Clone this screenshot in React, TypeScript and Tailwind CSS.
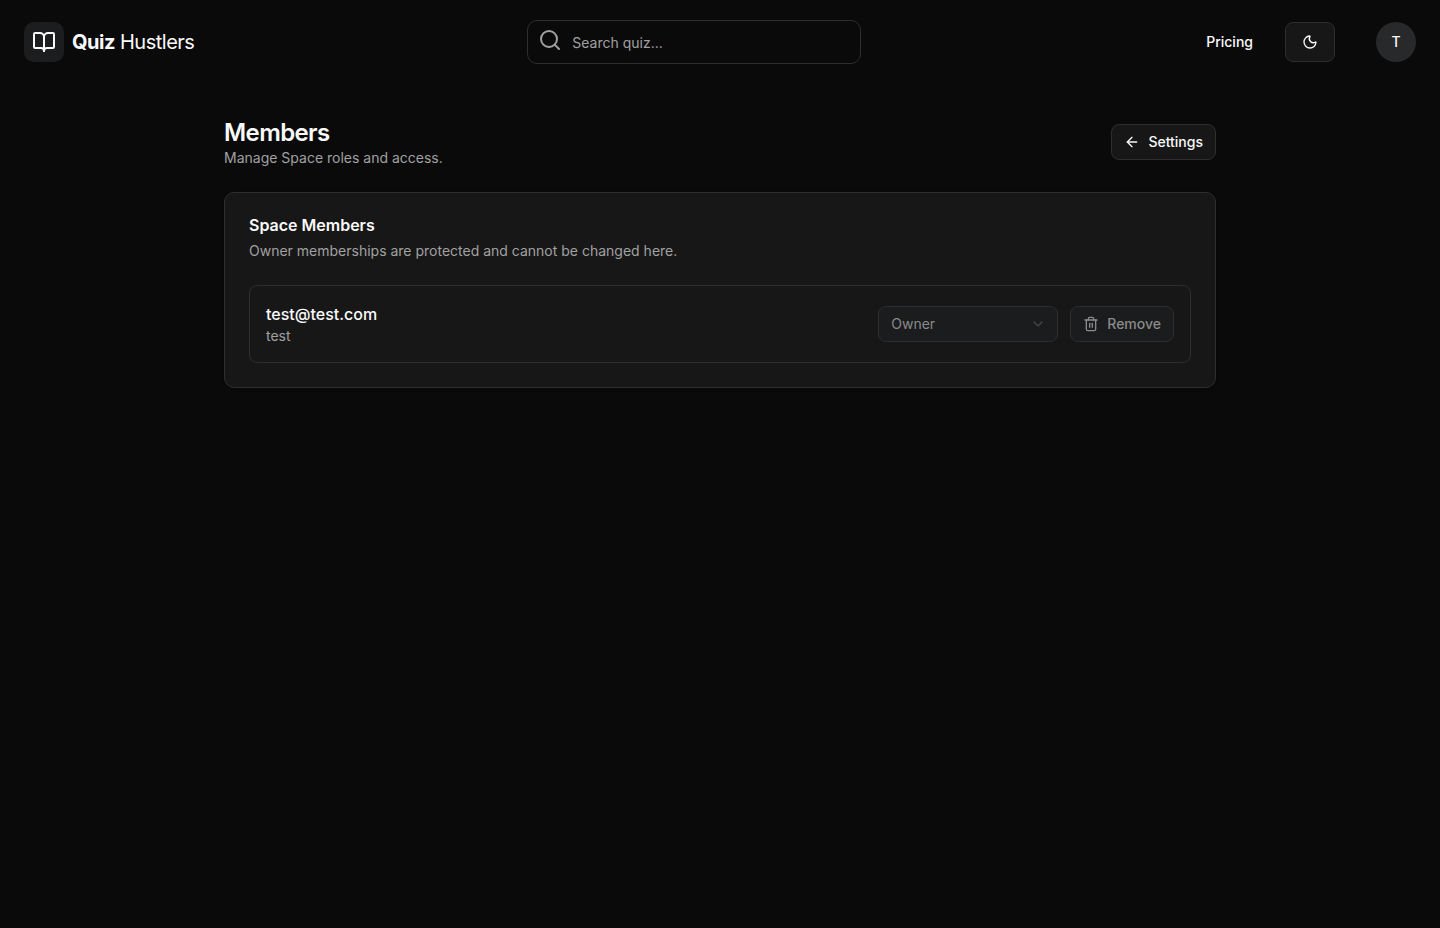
import type { ReactNode } from "react";
import { ArrowLeft, BookOpen, ChevronDown, Moon, Search, Trash2 } from "lucide-react";

function Header() {
  return (
    <header className="flex h-[84px] items-center justify-between px-6">
      <a href="#home" className="flex items-center gap-2">
        <span className="flex size-10 items-center justify-center rounded-[10px] bg-[#1c1d1f]">
          <BookOpen className="size-6" strokeWidth={2} />
        </span>
        <span className="text-xl tracking-tight">
          <span className="font-bold">Quiz</span> Hustlers
        </span>
      </a>

      <label className="flex h-11 w-[334px] rounded-[10px] border border-[#2e2e2e] px-[10px]">
        <Search className="mt-[7px] size-6 text-[#a1a1a1]" strokeWidth={2} />
        <input
          type="search"
          aria-label="Search quiz"
          placeholder="Search quiz..."
          className="ml-[10px] min-w-0 flex-1 bg-transparent pt-0.5 text-sm text-[#fafafa] outline-none placeholder:text-[#a1a1a1]"
        />
      </label>

      <div className="flex items-center">
        <a href="#pricing" className="px-3 text-sm font-medium">
          Pricing
        </a>
        <button
          type="button"
          aria-label="Toggle theme"
          className="ml-5 flex h-10 w-[50px] items-center justify-center rounded-lg border border-[#2e2e2e] bg-[#171717]"
        >
          <Moon className="size-4" strokeWidth={2} />
        </button>
        <button
          type="button"
          aria-label="Account"
          className="ml-[41px] flex size-10 items-center justify-center rounded-full bg-[#28292a] text-sm font-medium"
        >
          T
        </button>
      </div>
    </header>
  );
}

function Card({ title, description, children }: { title: string; description: string; children: ReactNode }) {
  return (
    <section className="mt-6 rounded-[10px] border border-[#2e2e2e] bg-[#171717] p-6 shadow-sm">
      <h2 className="text-base leading-4 font-semibold">{title}</h2>
      <p className="mt-2 text-sm text-[#a1a1a1]">{description}</p>
      <div className="mt-6">{children}</div>
    </section>
  );
}

function MemberRow({ email, name, role }: { email: string; name: string; role: string }) {
  return (
    <div className="flex items-center justify-between rounded-lg border border-[#2e2e2e] p-4">
      <div>
        <p className="text-base font-medium">{email}</p>
        <p className="text-sm text-[#a1a1a1]">{name}</p>
      </div>
      <div className="flex items-center gap-3">
        <div className="grid items-center">
          <select
            disabled
            aria-label={`Role for ${email}`}
            defaultValue={role}
            className="col-start-1 row-start-1 h-9 w-[180px] appearance-none rounded-lg border border-[#2e2e2e] bg-[#1b1c1d] px-3 text-sm text-[#8a8a8a] opacity-100"
          >
            <option>{role}</option>
          </select>
          <ChevronDown className="pointer-events-none col-start-1 row-start-1 mr-3 size-4 justify-self-end text-[#444544]" />
        </div>
        <button
          type="button"
          disabled
          className="flex h-9 items-center gap-2 rounded-lg border border-[#2e2e2e] bg-[#1b1c1d] px-3 text-sm font-medium text-[#8a8a8a]"
        >
          <Trash2 className="size-4" strokeWidth={2} />
          Remove
        </button>
      </div>
    </div>
  );
}

export default function App() {
  return (
    <div className="min-h-screen bg-[#0a0a0a] font-['Inter',sans-serif] text-[#fafafa] antialiased">
      <Header />
      <main className="mx-auto max-w-5xl px-4 pt-8">
        <div className="flex items-center justify-between">
          <div>
            <h1 className="pt-0.5 text-2xl leading-[30px] font-semibold tracking-tight">Members</h1>
            <p className="text-sm text-[#a1a1a1]">Manage Space roles and access.</p>
          </div>
          <a
            href="#settings"
            className="flex h-9 items-center gap-2 rounded-lg border border-[#2e2e2e] bg-[#171717] px-3 text-sm font-medium"
          >
            <ArrowLeft className="size-4" />
            Settings
          </a>
        </div>
        <Card title="Space Members" description="Owner memberships are protected and cannot be changed here.">
          <MemberRow email="test@test.com" name="test" role="Owner" />
        </Card>
      </main>
    </div>
  );
}
